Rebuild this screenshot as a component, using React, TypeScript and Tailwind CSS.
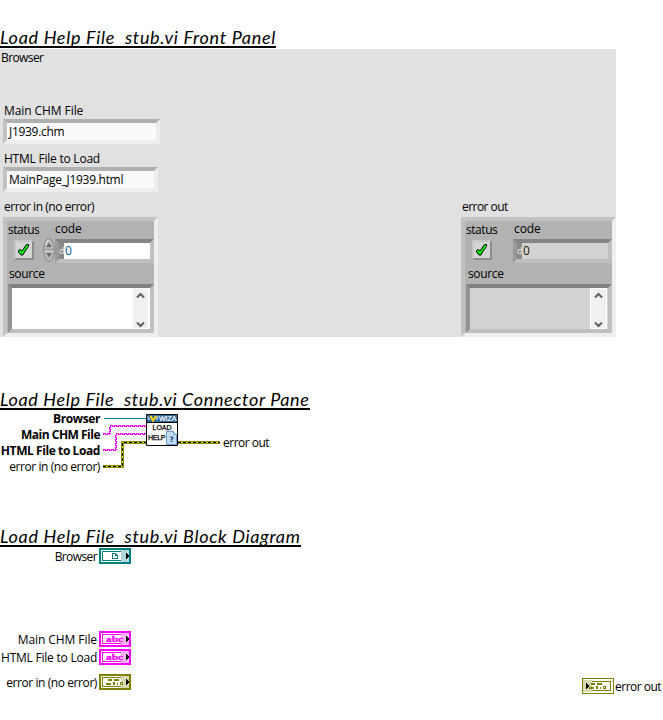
import React from "react";

function Heading({ text, className }: { text: string; className: string }) {
  return (
    <h2
      className={`overflow-hidden whitespace-pre border-b-2 border-black font-['Lato'] text-[18px] italic leading-[19px] h-[20px] ${className}`}
    >
      {text}
    </h2>
  );
}

function StringField({ value, className }: { value: string; className: string }) {
  return (
    <div
      className={`ml-[3px] h-[25px] border-4 border-t-[#b0b0b0] border-l-[#c2c2c2] border-r-[#ededed] border-b-[#ededed] bg-[#fafafa] pl-[2px] leading-[17px] tracking-[-0.3px] ${className}`}
    >
      {value}
    </div>
  );
}

function Check() {
  return (
    <div className="ml-[7px] mt-[3px] flex h-5 w-5 items-center justify-center border-2 border-t-[#c6c6c6] border-l-[#c6c6c6] border-r-[#8c8c8c] border-b-[#8c8c8c] bg-[#d4d4d4]">
      <svg width="14" height="14" viewBox="0 0 14 14">
        <path d="M9.500 1.500h2v2L7.500 9 6 12H4L1.500 9V7.500L3 6.500 5 8z" fill="#00f000" stroke="#000" />
      </svg>
    </div>
  );
}

function Spinner() {
  return (
    <svg width="12" height="24" viewBox="0 0 12 24">
      <ellipse cx="6" cy="12" rx="5.3" ry="11.3" fill="#b8b8b8" stroke="#858585" />
      <path d="M2.500 7Q3.500 2 6 2" stroke="#eee" fill="none" />
      <path d="M1 12h10" stroke="#777" />
      <path d="M1 13h10" stroke="#ddd" />
      <path d="M6 4.500 8.800 9H3.200zM6 19.500 8.800 15H3.200z" fill="#686868" />
    </svg>
  );
}

function ErrorCluster({ out = false }: { out?: boolean }) {
  const fill = out ? "bg-[#d2d2d2]" : "bg-white";
  return (
    <div className="h-[120px] w-[155px] border-4 border-t-[#c2c2c2] border-l-[#c2c2c2] border-r-[#eeeeee] border-b-[#eeeeee] bg-[#b2b2b2]">
      <div className="flex h-[45px]">
        <div className="w-9">
          <div className="ml-px h-4 pt-px leading-4 tracking-[-0.45px]">status</div>
          <Check />
        </div>
        <div className="flex w-[111px] flex-col">
          <div className={`h-4 leading-4 tracking-[-0.1px] ${out ? "pl-[13px]" : "pl-[12px]"}`}>code</div>
          <div className="flex h-[26px]">
            <div className="w-3 pt-px">{!out && <Spinner />}</div>
            <div className={`mt-[2px] flex h-6 flex-1 border-4 border-t-[#858585] border-l-[#989898] border-r-[#c0c0c0] border-b-[#c0c0c0] ${fill}`}>
              <span className="h-4 w-[5px] bg-[#8a8a8a] text-center text-[9px] leading-4 text-[#eeeeee]">d</span>
              <span className={`pl-px leading-4 ${out ? "text-[#2b1800]" : "text-[#06579b]"}`}>0</span>
            </div>
          </div>
        </div>
      </div>
      <div className={`h-[18px] leading-4 tracking-[-0.35px] ${out ? "pl-[3px]" : "pl-[2px]"}`}>source</div>
      <div className={`ml-px flex h-[49px] w-[146px] justify-end border-4 border-t-[#808080] border-l-[#929292] border-r-[#c0c0c0] border-b-[#c0c0c0] ${fill}`}>
        <div className="mr-px h-[41px] w-[17px] border border-white bg-[#f0f0f0]">
          <svg width="15" height="39" viewBox="0 0 15 39">
            <path d="m4 8.500 3.500-3.500L11 8.500M4 33.500 7.500 37l3.500-3.500" fill="none" stroke="#606060" strokeWidth="2" />
          </svg>
        </div>
      </div>
    </div>
  );
}

function FrontPanel() {
  return (
    <div className="h-[288px] w-[616px] bg-[#e1e1e1]">
      <div className="h-[54px] pl-px pt-px leading-4 tracking-[-0.6px]">Browser</div>
      <div className="h-4 pl-1 leading-4 tracking-[-0.08px]">Main CHM File</div>
      <StringField value="J1939.chm" className="w-[157px]" />
      <div className="mt-[7px] h-4 pl-1 leading-4 tracking-[-0.23px]">HTML File to Load</div>
      <StringField value="MainPage_J1939.html" className="w-[155px]" />
      <div className="mt-[7px] flex justify-between pl-[3px]">
        <div>
          <div className="h-[18px] pl-px leading-4 tracking-[-0.45px]">error in (no error)</div>
          <ErrorCluster />
        </div>
        <div>
          <div className="h-[18px] pl-px leading-4 tracking-[-0.55px]">error out</div>
          <ErrorCluster out />
        </div>
      </div>
    </div>
  );
}

function Wiring() {
  return (
    <svg width="118" height="64" viewBox="103 411 118 64" className="ml-[3px] shrink-0">
      <path d="M104 418.500h42" stroke="#008080" />
      <g fill="none" stroke="#ff00ff" shapeRendering="crispEdges">
        <path d="M103 433.500h7M109.500 434v-8M110 425.500h36M103 449.500h13M115.500 450v-16M116 433.500h30" strokeDasharray="3 1" />
        <path d="M103 434.500h7M110.500 434v-8M110 426.500h36M103 450.500h13M116.500 450v-16M116 434.500h30" strokeDasharray="3 1" strokeDashoffset="2" />
      </g>
      <g fill="none" shapeRendering="crispEdges">
        <path d="M103 466.500h19.500v-24h23.500M178 442.500h42" stroke="#898900" strokeWidth="3" />
        <path d="M103 466.500h19.500v-24h23.500M178 442.500h42" stroke="#e6e600" />
        <path d="M103 466.500h19.500v-24h23.500M178 442.500h42" stroke="#000" strokeDasharray="3 2" />
      </g>
      <path d="M146.500 414.500h31v31h-31z" fill="#fff" stroke="#000" />
      <path d="M147 415h30v7h-30z" fill="#316aa0" />
      <path d="M147 422.500h30" stroke="#000" />
      <path d="m147.500 416 1.500 4 2-4M156 416l1 4 1-4" fill="none" stroke="#b8cee0" />
      <path d="m150.500 416 2.500 4.500 3-4.500" fill="none" stroke="#ffd200" strokeWidth="2" />
      <text x="159" y="421" fontSize="7" textLength="17.500" lengthAdjust="spacing" fill="#fff" stroke="#fff" strokeWidth=".2" fontFamily="Liberation Sans">WIZA</text>
      <text x="152.500" y="430" fontSize="7" textLength="19" lengthAdjust="spacing" fontFamily="Liberation Sans" stroke="#000" strokeWidth=".25">LOAD</text>
      <text x="148" y="440" fontSize="7" textLength="17.500" lengthAdjust="spacing" fontFamily="Liberation Sans" stroke="#000" strokeWidth=".25">HELP</text>
      <path d="M166.500 431.500h7l3 3v10h-10z" fill="#c0dcf7" stroke="#6e9bd0" />
      <path d="M173.500 431.500v3h3" fill="#fff" stroke="#6e9bd0" />
      <text x="169.500" y="442" fontSize="7.500" fontWeight="700" fill="#163d78" fontFamily="DejaVu Sans">?</text>
    </svg>
  );
}

function ConnectorPane() {
  return (
    <div className="flex pt-px">
      <div className="flex w-[100px] flex-col items-end whitespace-nowrap leading-4">
        <div className="font-bold tracking-[-0.4px]">Browser</div>
        <div className="font-bold tracking-[-0.5px]">Main CHM File</div>
        <div className="font-bold tracking-[-0.42px]">HTML File to Load</div>
        <div className="tracking-[-0.42px]">error in (no error)</div>
      </div>
      <Wiring />
      <div className="ml-[2px] mt-6 h-4 leading-4 tracking-[-0.5px]">error out</div>
    </div>
  );
}

type Kind = "ref" | "string" | "error";

function Terminal({ kind, indicator = false }: { kind: Kind; indicator?: boolean }) {
  const color = kind === "ref" ? "#008080" : kind === "string" ? "#ff00ff" : "#808000";
  const tint = kind === "ref" ? "#b0d8d8" : kind === "string" ? "#ffb3ff" : "#d8d8b0";
  return (
    <svg width="32" height="16" viewBox="0 0 32 16" className="shrink-0" shapeRendering="crispEdges">
      <path d="M0 0h32v16H0z" fill={color} />
      <path d={indicator ? "M1 1h30v14H1z" : "M2 2h28v12H2z"} fill="#fff" />
      <path d="M3.500 3.500h25v9h-25z" fill="none" stroke={color} />
      <path d={indicator ? "M1 2h9v12H1z" : "M22 2h8v12h-8z"} fill={tint} />
      {kind === "ref" && <path d="M13.500 5.500h3l2 2v3h-5zM16.500 5.500v2h2" fill="none" stroke={color} />}
      {kind === "string" && (
        <text x="7" y="11" fontSize="9" fontWeight="700" textLength="17" lengthAdjust="spacingAndGlyphs" fill={color} stroke={color} strokeWidth=".3" fontFamily="Liberation Serif">abc</text>
      )}
      {kind === "error" && (
        <g fill={color}>
          <path d="M9 5h4v2H9zM15 5h5v2h-5zM7 9h5v2H7zM14 8h2v3h-2zM18 9h1v2h-1zM21 8h3v3h-3z" />
          <path d="M22 9h1v1h-1z" fill="#fff" />
        </g>
      )}
      <path d={indicator ? "M4 5h1v1h1v1h1v2H6v1H5v1H4z" : "M27 5h1v1h1v1h1v2h-1v1h-1v1h-1z"} fill="#000" />
    </svg>
  );
}

function ControlNode({ label, kind, spacing, className }: { label: string; kind: Kind; spacing: string; className: string }) {
  return (
    <div className={`flex h-4 w-[131px] items-start justify-end gap-[2px] whitespace-nowrap ${className}`}>
      <span className={`leading-[18px] ${spacing}`}>{label}</span>
      <Terminal kind={kind} />
    </div>
  );
}

export default function App() {
  return (
    <main className="h-[720px] w-[663px] overflow-hidden bg-white font-['Open_Sans','Noto_Sans',sans-serif] text-[12px] text-black">
      <Heading text="Load Help File  stub.vi Front Panel" className="mt-7 w-[276px] tracking-[0.7px]" />
      <div className="pt-px">
        <FrontPanel />
      </div>
      <Heading text="Load Help File  stub.vi Connector Pane" className="mt-[53px] w-[310px] tracking-[0.64px]" />
      <ConnectorPane />
      <Heading text="Load Help File  stub.vi Block Diagram" className="mt-[52px] w-[301px] tracking-[0.68px]" />
      <div className="flex items-end justify-between">
        <div>
          <ControlNode label="Browser" kind="ref" spacing="tracking-[-0.6px]" className="mt-px" />
          <ControlNode label="Main CHM File" kind="string" spacing="tracking-[-0.08px]" className="mt-[67px]" />
          <ControlNode label="HTML File to Load" kind="string" spacing="tracking-[-0.23px]" className="mt-[2px]" />
          <ControlNode label="error in (no error)" kind="error" spacing="tracking-[-0.42px]" className="mt-[9px]" />
        </div>
        <div className="-mb-1 flex h-4 w-[81px] gap-px whitespace-nowrap">
          <Terminal kind="error" indicator />
          <span className="leading-[18px] tracking-[-0.5px]">error out</span>
        </div>
      </div>
    </main>
  );
}
